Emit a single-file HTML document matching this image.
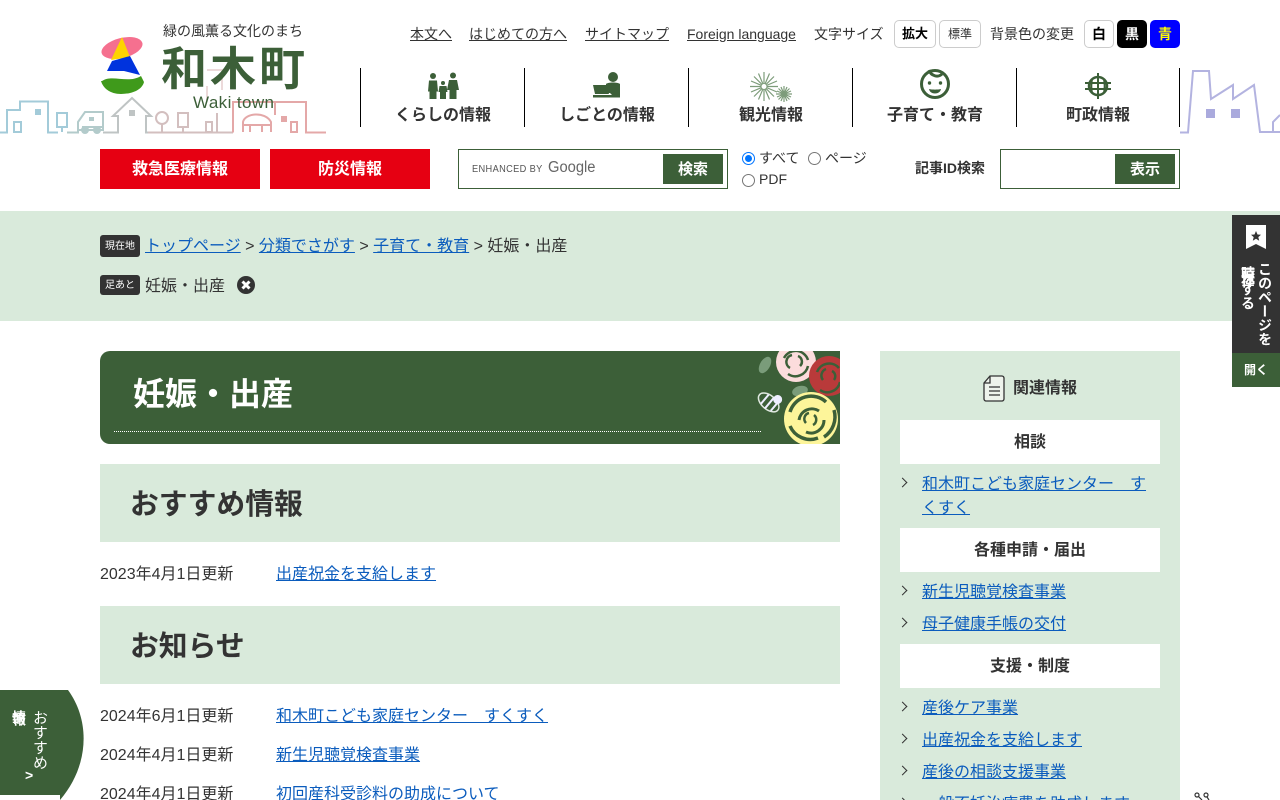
<!DOCTYPE html>
<html lang="ja"><head><meta charset="utf-8"><title>妊娠・出産</title>
<style>
html,body{margin:0;padding:0;width:1280px;height:800px;overflow:hidden;background:#fff}
body{position:relative;font-family:"Liberation Sans","Noto Sans CJK JP",sans-serif;font-size:16px;color:#333}
.a{position:absolute;white-space:nowrap;line-height:1}
a{color:#0b5cbd;text-decoration:underline}
.tl{color:#333;font-size:14px;top:27px}
.nav{position:absolute;top:107px;width:164px;text-align:center;font-weight:bold;font-size:16px;line-height:18px;color:#333}
.vl{position:absolute;top:68px;width:1px;height:59px;background:#000}
.tb{position:absolute;top:20px;height:28px;box-sizing:border-box;border:1px solid #ccc;border-radius:5px;text-align:center;line-height:26px;font-size:13px;background:#fff;color:#333}
.red{position:absolute;top:149px;width:160px;height:40px;background:#e60012;color:#fff;font-weight:bold;text-align:center;line-height:41px}
.gb{position:absolute;background:#3c5f38;color:#fff;font-weight:bold;text-align:center;font-size:15px}
.radio{position:absolute;width:11px;height:11px;border:1px solid #767676;border-radius:50%;background:#fff}
.tag{position:absolute;left:100px;width:40px;height:20px;background:#333;border-radius:3px;color:#fff;font-size:10px;line-height:21px;text-align:center}
.h2{position:absolute;left:100px;width:740px;height:78px;background:#d9eadb;font-size:28.8px;font-weight:bold;line-height:82px;text-indent:30px;color:#333}
.sh{position:absolute;left:900px;width:260px;height:44px;background:#fff;text-align:center;font-weight:bold;line-height:46px;color:#333}
.li{position:absolute;left:922px;width:238px;line-height:24px}
.ch{position:absolute;left:899px;width:6px;height:6px;border-top:1.5px solid #333;border-right:1.5px solid #333;transform:rotate(45deg)}
</style></head><body>

<!-- skyline left -->
<svg class="a" style="left:0;top:66px" width="330" height="70" viewBox="0 66 330 70" fill="none" stroke-width="2">
<g stroke="#a3cbd9">
<path d="M0 132.500H7V110H20V101.500H48V132.500H58M62 127V132M57 113H67V127H57z"/><path d="M14 122H21V132H14z"/><path fill="#a3cbd9" stroke="none" d="M35 109h6v6h-6z"/>
</g>
<g stroke="#b3cbcb"><path d="M67 132.500H78V122L85 112H103V130H78M82 127h20"/><circle cx="85" cy="130" r="3" fill="#b3cbcb"/><circle cx="97" cy="130" r="3" fill="#b3cbcb"/><path d="M89 117h5v4h-5z" fill="#b3cbcb" stroke="none"/></g>
<g stroke="#bfc4c4"><path d="M103 132.500H118V116H113L132 98L151 116H146V132.500H160"/><path fill="#bfc4c4" stroke="none" d="M129 110h6v6h-6z"/></g>
<g stroke="#d3bfbf"><circle cx="162" cy="118" r="6"/><path d="M162 124V133M148 132.500H178M178 113H188V127H178zM183 127V133M178 132.500H233"/><path d="M206 122H212V132H206zM217 113V132"/></g>
<g stroke="#e4a8a8"><path d="M233 132.500V102H306V132.500H326M275 102V115"/><path d="M243 132V122C245 113 265 111 271 122V132M243 125H271M250 125V132M262 125V132"/><path d="M291 122H297V132H291z"/></g>
<path fill="#e4a8a8" d="M281 116h6v6h-6z"/>
<path stroke="#ecdada" d="M207 70H222V90M207 86V100"/>
</svg>
<!-- skyline right -->
<svg class="a" style="left:1180px;top:66px" width="100" height="70" viewBox="1180 66 100 70" fill="none">
<path stroke="#b3b3e0" stroke-width="2" d="M1180 132.500H1188L1193 71H1209L1211 99L1233 85V99L1254 85L1260 132H1280"/>
<path fill="#aaaadd" d="M1206 109h9v9h-9zM1231 109h9v9h-9z"/>
<path stroke="#b3b3e0" stroke-width="2" d="M1273 132V122L1280 115"/>
</svg>

<!-- logo -->
<svg class="a" style="left:98px;top:32px" width="52" height="66" viewBox="98 32 52 66">
<ellipse cx="122" cy="48" rx="21" ry="10" transform="rotate(-14 122 48)" fill="#f5708f"/>
<path d="M122 37L111 60L130 57z" fill="#fdd400"/>
<path d="M112 61L130 56L140 75L124 71L107 71z" fill="#0033dd"/>
<path d="M102 81C112 74 128 84 141 76L144 82C142 90 132 94 121 94C110 94 103 88 101 81z" fill="#3f9a1b"/>
</svg>
<div class="a" style="left:163px;top:24px;font-size:14px;color:#333">緑の風薫る文化のまち</div>
<div class="a" style="left:161px;top:43px;font-size:46px;font-weight:bold;color:#3c5f38;letter-spacing:3px;font-family:'Noto Sans CJK JP',sans-serif">和木町</div>
<div class="a" style="left:193px;top:94px;font-size:17px;color:#3c5f38;letter-spacing:.4px">Waki town</div>

<!-- top links -->
<a class="a tl" style="left:410px">本文へ</a>
<a class="a tl" style="left:469px">はじめての方へ</a>
<a class="a tl" style="left:585px">サイトマップ</a>
<a class="a tl" style="left:687px">Foreign language</a>
<div class="a" style="left:814px;top:27px;font-size:14px">文字サイズ</div>
<div class="tb" style="left:894px;width:42px;font-weight:bold;color:#000">拡大</div>
<div class="tb" style="left:939px;width:42px;font-size:12px">標準</div>
<div class="a" style="left:990px;top:27px;font-size:14px">背景色の変更</div>
<div class="tb" style="left:1084px;width:30px;font-weight:bold;font-size:14px;color:#000">白</div>
<div class="tb" style="left:1117px;width:30px;background:#000;border-color:#000;color:#fff;font-weight:bold;font-size:14px">黒</div>
<div class="tb" style="left:1150px;width:30px;background:#00f;border-color:#00f;color:#ff0;font-weight:bold;font-size:14px">青</div>

<!-- nav -->
<div class="vl" style="left:360px"></div><div class="vl" style="left:524px"></div><div class="vl" style="left:688px"></div><div class="vl" style="left:852px"></div><div class="vl" style="left:1016px"></div><div class="vl" style="left:1179px"></div>
<div class="nav" style="left:361px">くらしの情報</div>
<div class="nav" style="left:525px">しごとの情報</div>
<div class="nav" style="left:689px">観光情報</div>
<div class="nav" style="left:853px">子育て・教育</div>
<div class="nav" style="left:1016px">町政情報</div>
<svg class="a" style="left:0;top:0" width="1280" height="110" viewBox="0 0 1280 110">
<g fill="#3c5f38">
<circle cx="433" cy="76" r="3"/><path d="M429 80.500h8l1 11h-1.500v7.500h-7v-7.500h-1.500z"/>
<circle cx="453" cy="75.500" r="3"/><path d="M449 80h8l2 10h-2.500v9h-7v-9H447z"/>
<circle cx="443" cy="83" r="2"/><path d="M439.500 86h7l1 6h-1.500v7h-6v-7h-1.500z"/>
<circle cx="613" cy="77" r="5"/><path d="M606 84c2-2 12-2 14 0v11h-8l-2-2h-4z"/><path d="M593 85h13l3 9h-14zM593 95h27v2.500h-27z"/>
</g>
<g stroke="#7d9c7a" fill="none" stroke-width="1.200">
<path d="M764 72v29M750 86.500h28M754 76.500l20 20M774 76.500l-20 20M758.500 73.500l11 26M769.500 73.500l-11 26M751 81l26 11M777 81l-26 11"/>
<path d="M784 86v16M776 94h16M778.500 88.500l11 11M789.500 88.500l-11 11M781 87l6 14M787 87l-6 14M777 91l14 6M791 91l-14 6"/>
</g>
<circle cx="764" cy="86.500" r="2.500" fill="#fff"/>
<g fill="none" stroke="#3c5f38" stroke-width="3">
<circle cx="935" cy="84" r="13.500"/>
<path d="M929 70c2 6 9 8 13 4" stroke-width="3"/>
</g>
<path d="M929 89c3 .8 9 .8 12 0c-1 6-11 6-12 0z" fill="#3c5f38"/>
<circle cx="929.500" cy="83" r="1.700" fill="#3c5f38"/><circle cx="940.500" cy="83" r="1.700" fill="#3c5f38"/>
<g fill="none" stroke="#3c5f38" stroke-width="2.500">
<circle cx="1098" cy="86" r="9"/><path d="M1098 73v26M1085 83h26M1085 89h26M1092 79c-1 5-1 9 0 14M1104 79c1 5 1 9 0 14" stroke-width="2"/>
</g>
</svg>

<!-- red buttons -->
<div class="red" style="left:100px">救急医療情報</div>
<div class="red" style="left:270px">防災情報</div>

<!-- search -->
<div class="a" style="left:458px;top:149px;width:270px;height:40px;box-sizing:border-box;border:1px solid #3c5f38;background:#fff"></div>
<div class="a" style="left:472px;top:164px;font-size:10.500px;color:#555;letter-spacing:.4px;transform-origin:0 0;transform:scaleX(.88)">ENHANCED BY</div>
<div class="a" style="left:548px;top:160px;font-size:15.500px;color:#666;transform-origin:0 0;transform:scaleX(.95)">Google</div>
<div class="gb" style="left:663px;top:154px;width:60px;height:30px;line-height:31px">検索</div>
<div class="a" style="left:742px;top:152px;width:13px;height:13px;border-radius:50%;background:#fff;border:1px solid #0075ff;box-sizing:border-box"></div>
<div class="a" style="left:745px;top:155px;width:7px;height:7px;border-radius:50%;background:#0075ff"></div>
<div class="a" style="left:759px;top:151px;font-size:14px">すべて</div>
<div class="radio" style="left:808px;top:152px"></div>
<div class="a" style="left:825px;top:151px;font-size:14px">ページ</div>
<div class="radio" style="left:742px;top:174px"></div>
<div class="a" style="left:759px;top:172px;font-size:14px">PDF</div>
<div class="a" style="left:915px;top:161px;font-size:14px;font-weight:bold">記事ID検索</div>
<div class="a" style="left:1000px;top:149px;width:180px;height:40px;box-sizing:border-box;border:1px solid #3c5f38"></div>
<div class="gb" style="left:1115px;top:154px;width:60px;height:30px;line-height:31px">表示</div>

<!-- breadcrumb -->
<div class="a" style="left:0;top:211px;width:1280px;height:110px;background:#d9eadb"></div>
<div class="tag" style="top:235px;height:22px;line-height:23px">現在地</div>
<div class="a" style="left:145px;top:239px"><a>トップページ</a> &gt; <a>分類でさがす</a> &gt; <a>子育て・教育</a> &gt; 妊娠・出産</div>
<div class="tag" style="top:275px">足あと</div>
<div class="a" style="left:145px;top:279px">妊娠・出産</div>
<svg class="a" style="left:237px;top:276px" width="18" height="18" viewBox="0 0 18 18"><circle cx="9" cy="9" r="9" fill="#333"/><path d="M5.500 5.500l7 7M12.500 5.500l-7 7" stroke="#fff" stroke-width="3"/></svg>

<!-- title -->
<div class="a" style="left:100px;top:351px;width:740px;height:93px;background:#3c5f38;border-radius:10px 0 0 10px;overflow:hidden">
<svg width="740" height="93" style="position:absolute;left:0;top:0" viewBox="100 351 740 93">
<path d="M114 431.500H762" stroke="#fff" stroke-width="1" stroke-dasharray="1 1"/>
<ellipse cx="765" cy="365" rx="5" ry="9" fill="#7a9c7a" transform="rotate(30 765 365)"/>
<ellipse cx="800" cy="391" rx="8" ry="5" fill="#7a9c7a" transform="rotate(-15 800 391)"/>
<circle cx="796" cy="362" r="20" fill="#fcdcdc"/><path d="M784 358a13 13 0 0 1 24 2M808 366a13 13 0 0 1-20 8M790 368a7 7 0 0 1 2-13M798 356a6 6 0 0 1 2 10" fill="none" stroke="#3c5f38" stroke-width="2.500"/>
<circle cx="829" cy="376" r="20" fill="#b93a3a"/><path d="M817 372a13 13 0 0 1 22-4M840 382a13 13 0 0 1-20 8M823 380a7 7 0 0 1 3-11M832 371a6 6 0 0 1 2 9" fill="none" stroke="#3c5f38" stroke-width="2.500"/>
<circle cx="811" cy="419" r="27" fill="#fdf59a"/>
<path d="M790 412a22 22 0 0 1 36-10M834 410a24 24 0 0 1-10 27M818 438a22 22 0 0 1-28-12" fill="none" stroke="#3c5f38" stroke-width="3.500"/>
<path d="M799 420a13 13 0 0 1 20-9M824 420a13 13 0 0 1-18 12" fill="none" stroke="#3c5f38" stroke-width="3"/>
<path d="M806 423a6 6 0 0 1 3-10M814 415a6 6 0 0 1-1 10" fill="none" stroke="#3c5f38" stroke-width="2.500"/>
<g transform="rotate(40 772 400)"><ellipse cx="771" cy="404" rx="12" ry="7" fill="#3c5f38" stroke="#dfe8df" stroke-width="1.500"/><circle cx="776" cy="396" r="4.500" fill="#eef"/><path d="M766 398v12M772 397v14M778 399v10" stroke="#eef" stroke-width="2"/></g>
</svg>
<div class="a" style="left:33px;top:27px;font-size:32px;font-weight:bold;color:#fff">妊娠・出産</div>
</div>

<!-- content -->
<div class="h2" style="top:464px">おすすめ情報</div>
<div class="a" style="left:100px;top:567px">2023年4月1日更新</div><a class="a" style="left:276px;top:567px">出産祝金を支給します</a>
<div class="h2" style="top:606px">お知らせ</div>
<div class="a" style="left:100px;top:709px">2024年6月1日更新</div><a class="a" style="left:276px;top:709px">和木町こども家庭センター　すくすく</a>
<div class="a" style="left:100px;top:748px">2024年4月1日更新</div><a class="a" style="left:276px;top:748px">新生児聴覚検査事業</a>
<div class="a" style="left:100px;top:787px">2024年4月1日更新</div><a class="a" style="left:276px;top:787px">初回産科受診料の助成について</a>

<!-- sidebar -->
<div class="a" style="left:880px;top:351px;width:300px;height:449px;background:#d9eadb"></div>
<svg class="a" style="left:983px;top:375px" width="22" height="27" viewBox="0 0 22 27" fill="#eef3ec" stroke="#333" stroke-width="1.300"><path d="M7 1h12c1 0 2 1 2 2v21c0 1-1 2-2 2H3c-1 0-2-1-2-2V8z"/><path d="M1 8h6V1M6 12h11M6 16h11M6 20h11" fill="none"/></svg>
<div class="a" style="left:1013px;top:381px;font-weight:bold">関連情報</div>
<div class="sh" style="top:420px">相談</div>
<div class="ch" style="top:479px"></div><div class="li" style="top:473px"><a>和木町こども家庭センター　すくすく</a></div>
<div class="sh" style="top:528px">各種申請・届出</div>
<div class="ch" style="top:587px"></div><div class="li" style="top:581px"><a>新生児聴覚検査事業</a></div>
<div class="ch" style="top:619px"></div><div class="li" style="top:613px"><a>母子健康手帳の交付</a></div>
<div class="sh" style="top:644px">支援・制度</div>
<div class="ch" style="top:703px"></div><div class="li" style="top:697px"><a>産後ケア事業</a></div>
<div class="ch" style="top:735px"></div><div class="li" style="top:729px"><a>出産祝金を支給します</a></div>
<div class="ch" style="top:767px"></div><div class="li" style="top:761px"><a>産後の相談支援事業</a></div>
<div class="ch" style="top:799px"></div><div class="li" style="top:793px"><a>一般不妊治療費を助成します</a></div>

<!-- right tab -->
<div class="a" style="left:1232px;top:215px;width:48px;height:138px;background:#333"></div>
<div class="a" style="left:1232px;top:353px;width:48px;height:34px;background:#3c5f38;color:#fff;font-size:12px;font-weight:bold;text-align:center;line-height:34px">開く</div>
<svg class="a" style="left:1246px;top:225px" width="20" height="25" viewBox="0 0 20 25"><path d="M0 0h20v24l-10-5-10 5z" fill="#fff"/><path d="M10 6l1.500 3.500 3.500.3-2.700 2.300.9 3.600-3.200-2-3.200 2 .9-3.600L5 9.800l3.500-.3z" fill="#333"/></svg>
<div class="a" style="left:1256px;top:262px;writing-mode:vertical-rl;font-size:14px;font-weight:bold;color:#fff;line-height:18px">このページを</div>
<div class="a" style="left:1240px;top:262px;writing-mode:vertical-rl;font-size:14px;font-weight:bold;color:#fff;line-height:16px;letter-spacing:-10px">一時保存</div>
<div class="a" style="left:1240px;top:268px;writing-mode:vertical-rl;font-size:14px;font-weight:bold;color:#fff;line-height:16px"><span style="display:inline-block;height:14px"></span>する</div>

<!-- left tab -->
<svg class="a" style="left:0;top:690px" width="84" height="110" viewBox="0 0 84 110"><path d="M0 0H68C90 30 90 75 60 110H0z" fill="#3c5f38"/><path d="M0 105H60V110H0z" fill="#fff"/></svg>
<div class="a" style="left:32px;top:710px;writing-mode:vertical-rl;font-size:15px;color:#fff">おすすめ</div>
<div class="a" style="left:12px;top:710px;writing-mode:vertical-rl;font-size:14px;color:#fff;font-weight:bold;letter-spacing:-12px">情報</div>
<div class="a" style="left:25px;top:768px;font-size:14px;color:#fff;font-weight:bold">&gt;</div>

<!-- bottom right -->
<svg class="a" style="left:1192px;top:792px" width="20" height="8" viewBox="0 0 20 8" fill="none" stroke="#333" stroke-width="1.200"><circle cx="5" cy="3" r="2"/><path d="M6.500 4.500L10 8"/><circle cx="14" cy="3" r="2"/><path d="M15 5L17 8"/></svg>
</body></html>
